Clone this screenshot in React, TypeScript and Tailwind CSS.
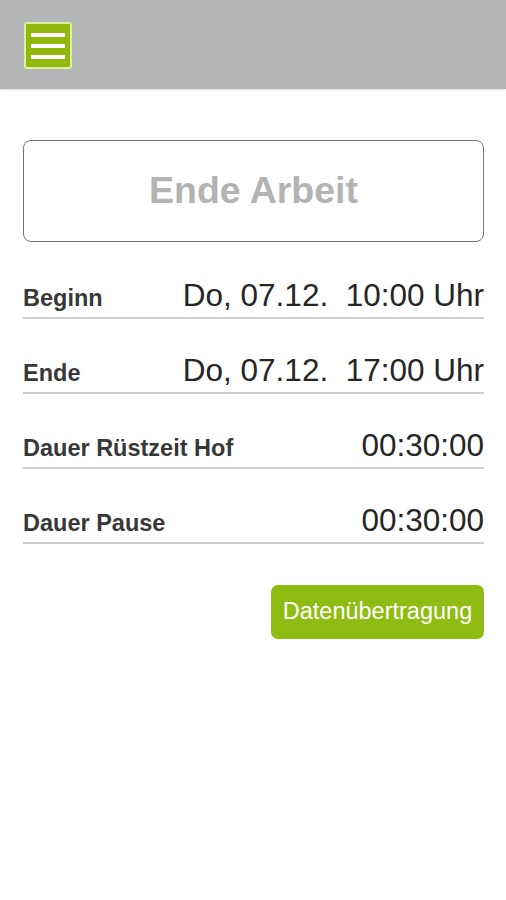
import React from "react";

const rows = [
  { label: "Beginn", value: "Do, 07.12.  10:00 Uhr" },
  { label: "Ende", value: "Do, 07.12.  17:00 Uhr" },
  { label: "Dauer Rüstzeit Hof", value: "00:30:00" },
  { label: "Dauer Pause", value: "00:30:00" },
];

function MenuButton() {
  return (
    <button className="flex h-[47px] w-[48px] flex-col items-center justify-center gap-[7px] rounded-[3px] border-2 border-[#dcef9a] bg-[#92b80f]">
      <span className="block h-[4px] w-[34px] bg-white" />
      <span className="block h-[4px] w-[34px] bg-white" />
      <span className="block h-[4px] w-[34px] bg-white" />
    </button>
  );
}

export default function App() {
  return (
    <div className="min-h-[900px] w-[506px] bg-white font-['Liberation_Sans',Arial,sans-serif]">
      <header className="h-[89px] bg-[#b4b5b7] pl-[24px] pt-[22px] shadow-[0_1px_2px_rgba(0,0,0,0.12)]">
        <MenuButton />
      </header>

      <main className="pl-[23px] pr-[22px] pt-[51px]">
        <div className="flex h-[102px] items-center justify-center rounded-[8px] border-[1.5px] border-[#747474]">
          <span className="text-[37.5px] font-bold leading-none text-[#b3b3b3]">Ende Arbeit</span>
        </div>

        <div className="mt-[2px]">
          {rows.map((r) => (
            <div
              key={r.label}
              className="flex h-[75px] items-end justify-between border-b-2 border-[#cdcdcd] pb-[6px]"
            >
              <div className="flex w-full items-baseline justify-between">
                <span className="text-[23.5px] font-bold leading-none text-[#383838]">{r.label}</span>
                <span className="whitespace-pre text-[31.5px] leading-none text-[#262626]">{r.value}</span>
              </div>
            </div>
          ))}
        </div>

        <div className="mt-[41px] flex justify-end">
          <button className="flex h-[54px] w-[213px] items-center justify-center rounded-[7px] bg-[#8fbc12] text-[23.5px] leading-none text-white">
            Datenübertragung
          </button>
        </div>
      </main>
    </div>
  );
}
